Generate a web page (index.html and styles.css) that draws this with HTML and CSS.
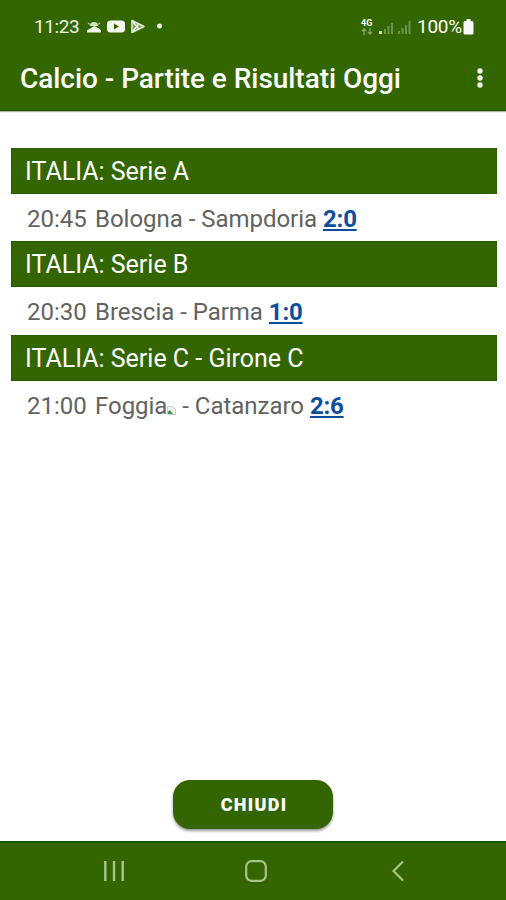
FILE: index.html
```html
<!DOCTYPE html>
<html lang="it">
<head>
<meta charset="utf-8">
<title>Calcio - Partite e Risultati Oggi</title>
<link rel="stylesheet" href="styles.css">
</head>
<body>
<div class="screen">
  <header class="top">
    <div class="status">
      <span class="clock">11:23</span>
      <svg class="notifications" width="80" height="18" viewBox="0 0 80 18">
        <path d="M1 14.500v-2l3-2 2-1a3 3 0 0 1 5 0l2 1 2 2v2z" fill="#f1f5e9"/>
        <path d="M4 8a4 4 0 0 1 8 0z" fill="#d5e1c6"/>
        <path d="M2 5l2 1.500M14 5l-2 1.500" stroke="#b5c9a0" stroke-width="1.200"/>
        <rect x="21" y="2.500" width="18" height="12" rx="3.500" fill="#f4f7ef"/>
        <path d="M28 5.500v6l5-3z" fill="#336600"/>
        <path d="M46 2.500v12l12-6z" fill="#7da060" stroke="#dfe9d4" stroke-width="1.600" stroke-linejoin="round"/>
        <path d="M46 2.500l7 9M46 14.500l7-9" stroke="#eef3e7" stroke-width="1.400"/>
        <circle cx="73.500" cy="8" r="2.500" fill="#f1f5e9"/>
      </svg>
      <span class="network"><span class="network-type">4G</span>
        <svg width="12" height="7" viewBox="0 0 12 7"><path d="M3 7V1M1 3l2-2 2 2M9 0v6M7 4l2 2 2-2" fill="none" stroke="#86a76a" stroke-width="1.300"/></svg>
      </span>
      <svg class="signal" width="34" height="16" viewBox="0 0 34 16">
        <g fill="#6d934b"><path d="M5 10h2v5H5zM8.500 7h2v8h-2zM12 4h2v11h-2zM19 12h2v3h-2zM22.500 9h2v6h-2zM26 6h2v9h-2zM29.500 2h2v13h-2z"/></g>
        <path d="M0 15v-3h3v3z" fill="#cfdfbf"/>
      </svg>
      <span class="percent">100%</span>
      <svg class="battery" width="11" height="16" viewBox="0 0 11 16"><path d="M3.500 0h4v2h1.500a1.500 1.500 0 0 1 1.500 1.500v10.500a1.500 1.500 0 0 1-1.500 1.500h-7a1.500 1.500 0 0 1-1.500-1.500V3.500A1.500 1.500 0 0 1 2 2h1.500z" fill="#f8faf5"/></svg>
    </div>
    <div class="appbar">
      <h1>Calcio - Partite e Risultati Oggi</h1>
      <svg class="more" width="8" height="22" viewBox="0 0 8 22" fill="#f6f8f2"><circle cx="4" cy="3" r="2.700"/><circle cx="4" cy="10" r="2.700"/><circle cx="4" cy="17" r="2.700"/></svg>
    </div>
  </header>
  <main>
    <h2>ITALIA: Serie A</h2>
    <p><span class="time">20:45</span><span class="match">Bologna - Sampdoria</span><a>2:0</a></p>
    <h2>ITALIA: Serie B</h2>
    <p><span class="time">20:30</span><span class="match">Brescia - Parma</span><a>1:0</a></p>
    <h2>ITALIA: Serie C - Girone C</h2>
    <p><span class="time">21:00</span><span class="match">Foggia<svg class="missing" width="9" height="9" viewBox="0 0 9 9"><path d="M.5.500h5l3 3v5h-8z" fill="#eef2f5" stroke="#c4cccf"/><path d="M1 8V5.500l2-1.500 3 4z" fill="#43a047"/></svg> - Catanzaro</span><a>2:6</a></p>
  </main>
  <div class="actions"><button>CHIUDI</button></div>
  <nav>
    <svg width="20" height="22" viewBox="0 0 20 22"><path d="M1.300 1v20M10 1v20M18.700 1v20" stroke="#a9c48d" stroke-width="2.400"/></svg>
    <svg class="home" width="22" height="22" viewBox="0 0 22 22"><rect x="1.200" y="1.200" width="19.600" height="19.600" rx="5.500" fill="none" stroke="#a9c48d" stroke-width="2.200"/></svg>
    <svg width="12" height="22" viewBox="0 0 12 22"><path d="M11 1.500L1.500 11l9.500 9.500" fill="none" stroke="#a9c48d" stroke-width="2.200"/></svg>
  </nav>
</div>
</body>
</html>
```
FILE: styles.css
```css
* { box-sizing: border-box; margin: 0; }
body { font-family: Roboto, "Liberation Sans", sans-serif; background: #fff; }
.screen { height: 900px; display: flex; flex-direction: column; overflow: hidden; }
svg { display: block; flex: none; }
.top { height: 111px; flex: none; background: #336600; border-bottom: 1px solid #195900; box-shadow: 0 1px 1px #a6b99a; color: #fdfefb; }
.status { height: 52px; display: flex; align-items: center; padding: 2px 32px 0 34px; font-size: 19px; line-height: 22px; white-space: nowrap; }
.clock { width: 52px; color: #edf3e5; letter-spacing: -0.4px; }
.network { margin-left: auto; width: 18px; display: flex; flex-direction: column; align-items: flex-start; }
.network-type { font-size: 9px; line-height: 9px; font-weight: 700; }
.signal { margin-right: 4px; }
.percent { width: 46px; letter-spacing: -0.3px; }
.appbar { height: 54px; display: flex; align-items: center; justify-content: space-between; padding: 0 22px 0 20px; }
h1 { font-size: 28px; line-height: 32px; font-weight: 500; letter-spacing: -0.050px; white-space: nowrap; }
main { flex: 1; padding: 37px 9px 0 11px; }
h2 { height: 46px; padding-left: 13px; background: #336600; border: 1px solid #265f00; color: #fdfefb; font-size: 25px; line-height: 45px; font-weight: 400; white-space: nowrap; }
main p { height: 47.300px; display: flex; padding-left: 16px; color: #626262; font-size: 24px; line-height: 51px; letter-spacing: -0.030px; white-space: nowrap; }
.time { width: 68px; }
.missing { display: inline-block; vertical-align: -1px; }
main a { margin-left: 6px; color: #0d4e9b; font-weight: 700; letter-spacing: -0.200px; text-decoration: underline; text-decoration-thickness: 2px; text-underline-offset: 2px; }
.actions { display: flex; justify-content: center; height: 61px; }
button { width: 160px; height: 49px; padding: 0 0 0 2px; border: 0; border-radius: 17px; background: #336600; color: #fff; font: 900 18px/50px Roboto, sans-serif; letter-spacing: 1.300px; box-shadow: 0 2px 3px #0006; }
nav { height: 59px; flex: none; display: flex; align-items: center; background: #336600; border-top: 2px solid #195900; padding: 0 102px 2px 104px; }
.home { margin: 0 auto 0 121px; }
```
